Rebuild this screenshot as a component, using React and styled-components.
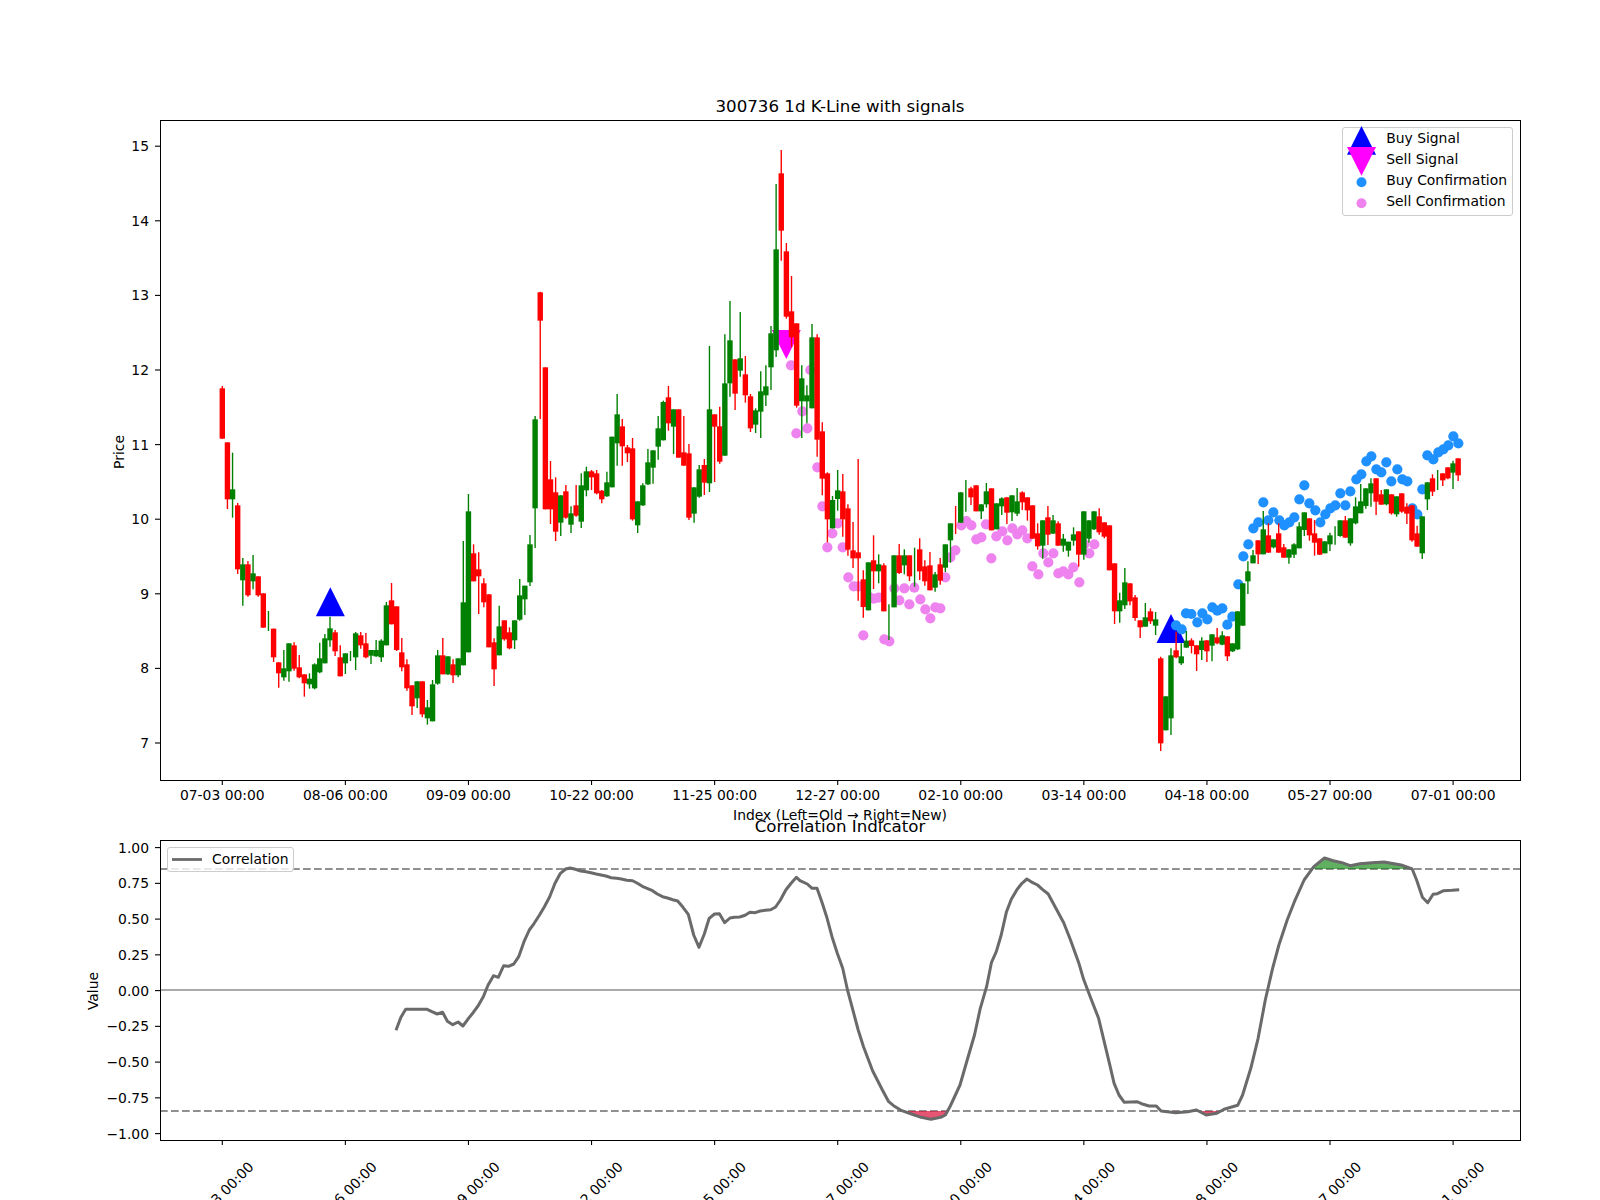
import React from "react";
import styled, { createGlobalStyle } from "styled-components";

const GlobalStyle = createGlobalStyle`
  html, body {
    margin: 0;
    padding: 0;
    height: 1200px;
    overflow: hidden;
    background: #fff;
  }
`;

const FONT = `"DejaVu Sans", sans-serif`;

const Figure = styled.div`
  width: 1361px;
  height: 1200px;
  padding: 97px 79px 0 160px;
  overflow: hidden;
  font-family: ${FONT};
  color: #000;
`;

const AxesTitle = styled.div`
  font-size: 16.67px;
  line-height: 20px;
  height: 20px;
  margin: ${(p) => p.$overlap ? "-6px" : "0"} 0 3px;
  padding-right: 1px;
  text-align: center;
  white-space: nowrap;
`;

const XLabel = styled.div`
  font-size: 13.9px;
  line-height: 16px;
  height: 16px;
  margin-top: 26px;
  padding-right: 1px;
  text-align: center;
  white-space: nowrap;
`;

const AxesFrame = styled.div`
  position: relative;
  width: 1361px;
  height: ${(p) => p.$h + 1}px;
  outline: 1px solid #000;
  outline-offset: -1px;
`;

const PlotSvg = styled.svg`
  display: block;
  width: 1360px;
  height: ${(p) => p.$h}px;
  overflow: visible;
  font-family: ${FONT};
  font-size: 13.9px;
  fill: #000;
`;

const Legend = styled.div`
  position: absolute;
  top: 7px;
  ${(p) => p.$side}: ${(p) => p.$inset}px;
  display: flex;
  flex-direction: column;
  box-sizing: border-box;
  padding: ${(p) => p.$pad};
  background: rgba(255, 255, 255, 0.8);
  border: 1px solid #ccc;
  border-radius: 3px;
  font-size: 13.9px;
`;

const LegendRow = styled.div`
  display: flex;
  align-items: flex-start;
  gap: 10px;
  height: ${(p) => p.$h}px;
  line-height: ${(p) => p.$h}px;
  white-space: nowrap;
`;

const Swatch = styled.svg`
  flex: none;
  width: ${(p) => p.$w}px;
  height: 21px;
  overflow: visible;
`;

// wick top, body top, body bottom, wick bottom, read from the chart at 3x.
// null body = only a wick is visible
const R = "#ff0000";
const G = "#008000";

const segA = [
  [R,-42,-35,116,116],[R,127,127,298,327],[G,158,268,298,353],[R,309,316,508,522],[G,474,493,541,617],
  [R,483,493,586,590],[G,465,520,544,568],[R,529,529,586,590],[R,580,580,683,683],[G,633,null,null,693],
  [R,686,686,772,786],[R,787,787,820,863],[G,750,805,832,842],[G,730,730,814,845],[R,727,736,806,812],
  [R,765,802,832,835],[R,823,823,850,890],[G,820,836,853,866],[G,790,793,865,868],[G,728,775,817,820],
  [G,702,715,790,790],[G,650,685,721,740],[R,690,697,754,768],[R,736,772,829,829],[G,760,760,790,822],
  [G,753,null,null,783],[G,696,700,772,810],[R,696,706,736,746],[R,699,730,772,775],[G,750,750,767,792],
  [G,720,750,769,770],[G,718,722,772,786],[G,606,616,736,736],[R,549,601,673,673],[R,619,619,750,753],
  [R,714,757,802,814],[R,778,793,865,872],[R,856,856,919,945],[G,844,844,895,924],[R,844,844,943,952],
  [G,900,922,955,974],[G,840,853,964,964],[G,750,766,851,854],[R,714,766,823,823],[G,769,769,823,825],
  [R,778,793,826,849],[G,775,775,826,832],[G,423,607,796,796],[G,282,334,757,757],[R,433,460,544,544],
  [R,457,508,529,642],[R,535,550,607,622],[R,583,583,742,742],[R,715,727,808,858],[G,617,679,766,766],
  [R,661,661,718,722],[R,682,697,745,748],[G,661,661,721,747],[G,537,586,659,662],[G,557,557,598,645],
  [G,405,433,547,558],[G,48,58,325,444],[R,-325,-323,-238,57],[R,-98,-98,328,328],[R,183,238,328,372],
  [R,232,277,395,423],[G,286,286,368,408],[R,255,274,353,356],[G,319,340,374,399],[R,255,316,347,350],
  [G,220,256,365,384],[G,200,214,271,289],[R,210,214,232,270],[R,210,220,280,283],[R,270,272,298,310],
  [G,215,247,289,290],[G,110,110,262,262],[G,-18,43,130,197],[R,57,79,139,197],[R,135,142,160,186],
  [R,114,145,358,362],[G,304,304,376,399],[G,250,256,316,318],[G,147,187,253,255],
];

const segB = [
  [G,961,961,1013,1061],[G,858,895,950,989],[G,812,816,931,931],[R,768,802,880,902],[G,838,838,890,972],
  [R,838,838,983,983],[R,858,967,1007,1007],[R,942,970,1163,1170],[G,1072,1072,1151,1178],[G,1005,1018,1100,1103],
  [R,987,1005,1058,1095],[G,648,838,1060,1086],[R,853,853,890,1056],[R,830,889,995,1001],[G,613,760,977,977],
  [G,513,631,760,800],[R,688,688,791,840],[G,546,685,722,740],[R,678,733,796,818],[R,792,799,895,906],
  [G,835,841,884,909],[G,724,784,845,924],[G,706,769,796,828],[G,588,610,712,780],[G,162,358,661,681],
  [R,60,130,302,392],[R,339,364,560,566],[R,438,544,622,652],[R,580,580,827,833],[G,706,745,814,924],
  [G,766,796,814,880],[G,582,622,835,835],[R,613,622,929,980],[R,877,904,1046,1096],
];

const segC = [
  [R,97,100,238,307],[G,168,180,265,265],[G,90,151,177,212],[R,102,154,238,290],[R,193,205,329,347],
  [R,246,331,355,384],[R,57,337,355,482],[R,391,418,501,533],[G,367,367,511,511],[R,286,361,394,447],
  [G,343,373,394,430],[R,370,376,514,514],[G,493,null,null,600],[G,346,346,502,502],[R,312,346,399,402],
  [G,328,346,376,403],[R,346,346,409,423],[G,323,null,null,440],[R,295,328,394,420],[R,361,379,424,437],
  [R,336,376,451,451],[G,396,403,443,455],[R,354,373,422,434],[G,313,313,383,396],[G,250,250,301,368],
  [R,198,null,null,282],[G,157,157,248,248],[G,120,null,null,215],[R,140,145,172,195],[R,136,136,214,214],
  [G,193,193,214,237],[G,129,154,193,203],[R,145,145,271,271],[G,190,190,268,268],[G,172,175,199,225],
  [R,172,172,218,252],[G,166,166,217,243],[G,144,184,221,228],[R,154,157,187,210],[R,172,172,211,242],
  [R,196,196,296,296],[R,250,280,319,329],[G,241,241,317,356],[R,198,232,284,315],[G,225,241,281,281],
  [R,244,250,317,317],[G,282,296,317,335],[G,305,305,332,350],[G,262,283,302,317],[R,274,274,344,380],
  [G,214,214,344,359],[G,241,241,296,308],[G,214,214,268,270],[R,205,229,277,284],
];

const segD = [
  [R,367,367,410,415],[R,376,376,511,511],[R,490,490,634,672],[G,578,601,634,668],[G,504,547,616,627],
  [R,550,550,604,616],[R,585,592,654,662],[R,661,661,682,714],[G,609,652,680,680],[R,625,634,664,672],
  [G,636,658,677,705],[R,770,775,1030,1053],[G,889,889,991,991],[G,745,766,955,1005],[R,695,751,772,775],
  [G,730,769,790,795],[G,693,722,743,743],[R,715,721,738,760],[R,736,736,763,813],[G,712,722,750,780],
  [R,721,721,754,786],[G,703,703,737,784],[R,684,712,730,733],[G,694,706,734,736],[R,709,709,769,783],
  [G,730,730,754,756],[G,634,634,748,750],[G,550,550,677,677],[G,484,514,544,582],[G,450,466,490,490],
  [R,421,421,463,492],[G,333,388,463,463],[R,370,406,458,458],[G,418,418,442,445],[R,370,400,458,458],
  [R,432,442,473,473],[G,448,448,473,491],[G,430,433,464,474],[G,367,379,445,445],[G,337,337,390,408],
  [R,355,355,406,422],[R,360,400,428,467],[R,415,415,464,465],[G,424,424,460,460],[G,398,406,433,453],
  [G,379,null,null,434],[G,361,361,408,410],[R,348,361,413,413],[G,355,355,430,437],[G,292,319,370,373],
  [G,252,304,340,340],[G,265,265,318,326],[G,235,250,280,320],[R,235,235,305,345],[R,270,283,314,314],
  [G,268,268,313,316],[R,283,283,340,344],[G,289,289,343,350],[R,280,280,335,338],[R,310,320,341,372],
  [R,316,316,421,425],[R,377,400,440,440],[G,349,349,460,477],[G,247,247,298,330],[R,223,235,275,288],
  [G,210,null,null,270],[R,220,220,241,258],[R,202,202,235,238],[G,182,190,218,267],[R,175,175,226,243],
];

const toFrame = (rows, base) =>
  rows.map(([c, wt, bt, bb, wb]) => ({
    c,
    wt: base + wt / 3 - 120,
    wb: base + wb / 3 - 120,
    bt: bt === null ? null : base + bt / 3 - 120,
    bb: bb === null ? null : base + bb / 3 - 120,
  }));

const candles = [
  ...toFrame(segA, 400),
  ...toFrame(segB, 130),
  ...toFrame(segC, 440),
  ...toFrame(segD, 400),
];

const slotX = (i) => 62.3 + 5.128 * i;

const sellDots = [
  [423,-224],[481,-210],[457,-86],[472,-35],[439,-20],[502,82],[517,199],[563,250],[547,280],[532,322],
  [578,322],[595,412],[611,439],[626,439],[656,470],[671,476],[686,473],[640,586],[703,598],[718,604],
  [733,445],[748,481],[763,445],[778,493],[793,443],[811,478],[826,508],[841,535],[856,502],[871,505],
  [886,412],[901,352],[916,331],[934,256],[949,243],[964,256],[979,298],[994,292],[1008,253],[1024,355],
  [1039,289],[1057,274],[1072,301],[1087,265],[1102,283],[1117,271],[1132,295],[1147,379],[1165,403],[1180,340],
  [1195,367],[1210,340],[1225,400],[1240,394],[1255,403],[1270,382],[1288,427],[1303,313],[1318,340],[1333,313],
].map(([x, y]) => [650 + x / 3 - 160, 440 + y / 3 - 120]);

const buyDots = [
  [378,676],[395,688],[408,640],[424,642],[442,667],[457,640],[472,658],[487,622],[502,632],[517,625],
  [532,674],[547,650],[565,553],[580,469],[595,433],[610,385],[625,367],[640,307],[655,361],[670,337],
  [688,361],[703,376],[718,367],[733,352],[748,298],[763,256],[778,310],[796,331],[811,367],[826,343],
  [841,325],[856,316],[871,280],[886,316],[901,274],[919,238],[934,223],[949,184],[964,169],[979,208],
  [994,217],[1009,187],[1024,244],[1042,208],[1057,238],[1072,244],[1087,325],[1102,343],[1117,268],[1132,166],
  [1150,178],[1165,157],[1180,148],[1195,136],[1210,109],[1225,130],
].map(([x, y]) => [1050 + x / 3 - 160, 400 + y / 3 - 120]);

const corrLeft = [
  [652,721],[662,682],[672,658],[690,658],[716,658],[726,665],[737,672],[748,667],[758,694],[769,704],
  [780,696],[790,708],[800,688],[811,668],[821,648],[832,620],[842,585],[853,557],[863,562],[874,527],
  [884,529],[895,522],[905,500],[916,455],[927,420],[937,400],[948,375],[958,350],[969,320],[980,280],
  [991,250],[1002,237],[1011,234],[1022,238],[1033,243],[1044,245],[1054,248],[1065,252],[1075,255],[1085,258],
  [1096,263],[1107,265],[1117,267],[1128,271],[1140,272],[1150,280],[1160,289],[1170,295],[1181,302],[1191,312],
  [1202,320],[1212,324],[1223,329],[1233,333],[1244,352],[1255,373],[1266,435],[1277,472],[1288,432],[1298,385],
  [1309,372],[1319,371],[1330,398],[1341,384],[1350,382],[1361,381],[1372,376],[1382,367],[1393,368],[1403,363],
  [1414,361],[1425,359],[1435,351],[1445,330],[1456,300],[1467,280],[1478,262],
];

const corrRight = [
  [0,272],[15,282],[25,295],[35,295],[46,340],[56,385],[66,440],[77,490],[88,535],[98,600],
  [110,665],[120,720],[131,770],[150,843],[170,900],[183,935],[193,947],[210,962],[230,972],[250,982],
  [270,988],[290,982],[300,975],[310,948],[330,885],[345,810],[360,735],[372,655],[385,590],[395,517],
  [405,485],[415,435],[426,365],[436,328],[448,298],[458,280],[468,267],[480,278],[490,285],[500,298],
  [512,312],[528,355],[544,398],[558,450],[575,518],[585,568],[600,625],[616,685],[630,770],[640,830],
  [648,880],[658,915],[669,937],[695,935],[708,943],[720,948],[735,948],[745,963],[775,968],[800,965],
  [818,960],[838,975],[860,970],[875,958],[903,946],[913,915],[930,835],[945,745],[960,630],[975,535],
  [988,465],[1005,390],[1020,335],[1040,270],[1060,230],[1082,204],[1100,212],[1118,218],[1135,227],[1155,221],
  [1180,218],[1205,216],[1240,225],[1263,237],[1272,270],[1284,322],[1295,338],[1306,313],[1315,311],[1328,302],
  [1345,301],[1360,299],
];

const corr = [
  ...corrLeft.map(([x, y]) => [x / 2.063 - 80, y / 3 - 50]),
  ...corrRight.map(([x, y]) => [640 + x / 2.063, y / 3 - 50]),
];
const corrPoints = corr.map((p) => p.map((v) => v.toFixed(1)).join(",")).join(" ");

const HIGH_Y = 29;
const LOW_Y = 271;
const firstX = corr[0][0].toFixed(1);
const lastX = corr[corr.length - 1][0].toFixed(1);

const dates = ["07-03", "08-06", "09-09", "10-22", "11-25", "12-27", "02-10", "03-14", "04-18", "05-27", "07-01"];
const tickX = (i) => 62.3 + 123.08 * i;

const priceTicks = [15, 14, 13, 12, 11, 10, 9, 8, 7].map((v) => ({ label: String(v), y: 623 - (v - 7) * 74.6 }));
const corrTicks = ["1.00", "0.75", "0.50", "0.25", "0.00", "\u22120.25", "\u22120.50", "\u22120.75", "\u22121.00"].map(
  (label, i) => ({ label, y: 7.6 + i * 35.75 })
);

const YTicks = ({ ticks }) =>
  ticks.map((t) => (
    <g key={t.label}>
      <line x1="-5" x2="0" y1={t.y} y2={t.y} stroke="#000" strokeWidth="1.1" />
      <text x="-11" y={t.y + 5} textAnchor="end">{t.label}</text>
    </g>
  ));

const Triangle = ({ x, y, fill, down }) => (
  <polygon
    fill={fill}
    points={down
      ? `${x - 14.5},${y} ${x + 14.5},${y} ${x},${y + 29}`
      : `${x},${y} ${x + 14.5},${y + 29} ${x - 14.5},${y + 29}`}
  />
);

const PricePlot = () => (
  <PlotSvg $h={660} viewBox="0 0 1360 660">
    <Triangle x={170.3} y={467.3} fill="#0000ff" />
    <Triangle x={1011} y={494} fill="#0000ff" />
    <Triangle x={626.3} y={210} fill="#ff00ff" down />
    {sellDots.map(([x, y], i) => <circle key={i} cx={x} cy={y} r="5.1" fill="#ee82ee" />)}
    {buyDots.map(([x, y], i) => <circle key={i} cx={x} cy={y} r="5.1" fill="#1e90ff" />)}
    {candles.map((c, i) => (
      <g key={i}>
        <line x1={slotX(i)} x2={slotX(i)} y1={c.wt} y2={c.wb} stroke={c.c} strokeWidth="1.39" />
        {c.bt !== null && <rect x={slotX(i) - 2.7} y={c.bt} width="5.4" height={c.bb - c.bt} fill={c.c} />}
      </g>
    ))}
    <YTicks ticks={priceTicks} />
    {dates.map((d, i) => (
      <g key={d}>
        <line x1={tickX(i)} x2={tickX(i)} y1="660" y2="665" stroke="#000" strokeWidth="1.1" />
        <text x={tickX(i)} y="680" textAnchor="middle">{d} 00:00</text>
      </g>
    ))}
    <text transform="translate(-36 332) rotate(-90)" textAnchor="middle">Price</text>
  </PlotSvg>
);

const CorrPlot = () => (
  <PlotSvg $h={300} viewBox="0 0 1360 300">
    <defs>
      <clipPath id="overHigh"><rect x="0" y="0" width="1360" height={HIGH_Y} /></clipPath>
      <clipPath id="underLow"><rect x="0" y={LOW_Y} width="1360" height={300 - LOW_Y} /></clipPath>
    </defs>
    <line x1="0" x2="1360" y1={HIGH_Y} y2={HIGH_Y} stroke="#909090" strokeWidth="2.08" strokeDasharray="7.7 3.3" />
    <line x1="0" x2="1360" y1={LOW_Y} y2={LOW_Y} stroke="#909090" strokeWidth="2.08" strokeDasharray="7.7 3.3" />
    <line x1="0" x2="1360" y1="150" y2="150" stroke="#aaaaaa" strokeWidth="2.08" />
    <polygon
      points={`${firstX},${HIGH_Y} ${corrPoints} ${lastX},${HIGH_Y}`}
      fill="#008000"
      fillOpacity="0.62"
      clipPath="url(#overHigh)"
    />
    <polygon
      points={`${firstX},${LOW_Y} ${corrPoints} ${lastX},${LOW_Y}`}
      fill="#dc143c"
      fillOpacity="0.72"
      clipPath="url(#underLow)"
    />
    <polyline points={corrPoints} fill="none" stroke="#6a6a6a" strokeWidth="3" strokeLinejoin="round" />
    <YTicks ticks={corrTicks} />
    {dates.map((d, i) => (
      <g key={d}>
        <line x1={tickX(i)} x2={tickX(i)} y1="300" y2="305" stroke="#000" strokeWidth="1.1" />
        <text
          transform={`translate(${tickX(i) - 0.5} 355) rotate(-45)`}
          textAnchor="middle"
          dominantBaseline="middle"
        >
          {d} 00:00
        </text>
      </g>
    ))}
    <text transform="translate(-62 151) rotate(-90)" textAnchor="middle">Value</text>
  </PlotSvg>
);

const signalLegend = [
  {
    label: "Buy Signal",
    mark: <polygon points="14.5,-2 29,26.7 0,26.7" fill="#0000ff" />,
  },
  {
    label: "Sell Signal",
    mark: <polygon points="0,-2 29,-2 14.5,26.7" fill="#ff00ff" />,
  },
  {
    label: "Buy Confirmation",
    mark: <circle cx="14.5" cy="12.3" r="5" fill="#1e90ff" />,
  },
  {
    label: "Sell Confirmation",
    mark: <circle cx="14.5" cy="12.3" r="5" fill="#ee82ee" />,
  },
];

export default function App() {
  return (
    <>
      <GlobalStyle />
      <Figure>
        <AxesTitle>300736 1d K-Line with signals</AxesTitle>
        <AxesFrame $h={660}>
          <PricePlot />
          <Legend $side="right" $inset={8} $pad="0 5px 3px 4px">
            {signalLegend.map((row) => (
              <LegendRow key={row.label} $h={21}>
                <Swatch $w={29} viewBox="0 0 29 21">{row.mark}</Swatch>
                <span>{row.label}</span>
              </LegendRow>
            ))}
          </Legend>
        </AxesFrame>
        <XLabel>Index (Left=Old → Right=New)</XLabel>
        <AxesTitle $overlap>Correlation Indicator</AxesTitle>
        <AxesFrame $h={300}>
          <CorrPlot />
          <Legend $side="left" $inset={7} $pad="1px 4px 1px 4px">
            <LegendRow $h={21}>
              <Swatch $w={30} viewBox="0 0 30 21">
                <line x1="0" x2="30" y1="10.5" y2="10.5" stroke="#6a6a6a" strokeWidth="2.78" />
              </Swatch>
              <span>Correlation</span>
            </LegendRow>
          </Legend>
        </AxesFrame>
      </Figure>
    </>
  );
}
